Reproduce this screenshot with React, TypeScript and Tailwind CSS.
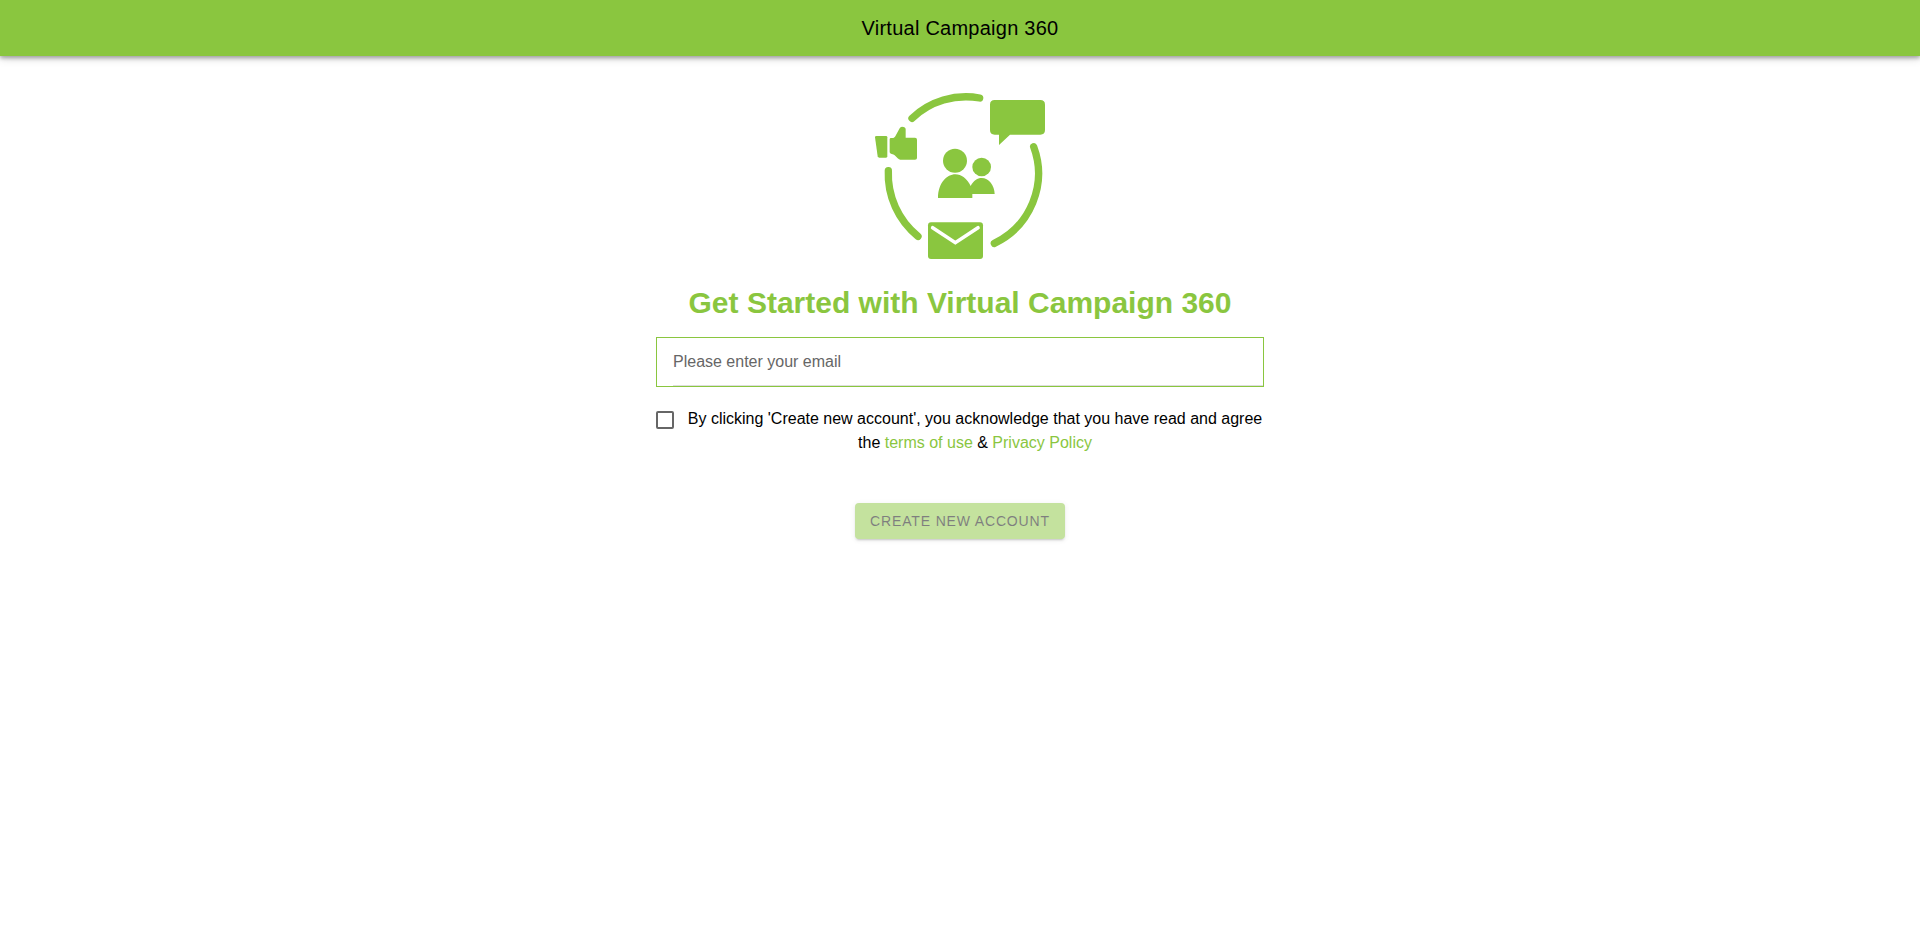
import { useState } from "react";

function CampaignLogo() {
  return (
    <svg
      viewBox="0 0 600 570"
      className="h-[190px] w-[200px] text-[#8ac63f]"
      fill="currentColor"
      role="img"
      aria-label="Virtual Campaign 360 logo"
    >
      {/* ring */}
      <g
        fill="none"
        stroke="currentColor"
        strokeWidth="22"
        strokeLinecap="round"
      >
        <path d="M156 115A235 235 0 0 1 359 54" />
        <path d="M521 200A232 232 0 0 1 403 490" />
        <path d="M85 272A240 240 0 0 0 174 469" />
      </g>
      {/* thumbs up */}
      <path d="M49 168H78Q82 168 82 172V229Q82 233 78 233H58Q54 233 53 229L45 172Q45 168 49 168Z" />
      <path d="M93 174H100Q104 173 106 169L119 145Q121 140 126 140Q137 140 137 148V173H165Q171 173 171 179V234Q171 239 165 239H121Q117 239 113 235L104 226Q102 223 93 221Q89 220 89 216V178Q89 174 93 174Z" />
      {/* speech bubble */}
      <path d="M404 60H541Q555 60 555 74V150Q555 164 541 164H450L417 195V164H404Q390 164 390 150V74Q390 60 404 60Z" />
      {/* people */}
      <circle cx="285" cy="242" r="36" />
      <circle cx="365" cy="261" r="28" />
      <path d="M234 354C234 309 261 283 286 283C304 283 321 296 332 318C341 302 352 294 365 294C386 294 404 317 404 342H337V354Z" />
      {/* envelope */}
      <rect x="204" y="427" width="165" height="110" rx="9" />
      <path
        d="M218 443L286 488L354 443"
        fill="none"
        stroke="white"
        strokeWidth="11"
        strokeLinecap="round"
      />
    </svg>
  );
}

export default function App() {
  const [email, setEmail] = useState("");
  const [agreed, setAgreed] = useState(false);

  return (
    <div className="min-h-screen bg-white font-['Liberation_Sans',Arial,sans-serif] text-base text-black">
      <header className="flex h-14 items-center justify-center bg-[#8ac63f] shadow-[0_2px_4px_rgba(0,0,0,0.3),0_1px_10px_rgba(0,0,0,0.2)]">
        <div className="text-xl tracking-[0.0125em]">Virtual Campaign 360</div>
      </header>

      <main className="mx-auto flex max-w-[640px] flex-col items-center px-4 pt-6">
        <CampaignLogo />

        <h1 className="mt-[15px] text-center text-3xl leading-9 font-bold text-[#8ac63f]">
          Get Started with Virtual Campaign 360
        </h1>

        <form
          className="mt-4 flex w-full flex-col items-center"
          onSubmit={(e) => e.preventDefault()}
        >
          <div className="w-full border border-[#8ac63f] pl-4">
            <input
              type="email"
              aria-label="Email"
              placeholder="Please enter your email"
              value={email}
              onChange={(e) => setEmail(e.target.value)}
              className="block h-12 w-full border-b border-[#dedede] pr-4 outline-none placeholder:text-[#666666]"
            />
          </div>

          <div className="mt-5 flex w-full items-start gap-3">
            <input
              id="agree"
              type="checkbox"
              checked={agreed}
              onChange={(e) => setAgreed(e.target.checked)}
              className="mt-1 size-[18px] shrink-0 appearance-none rounded-[2px] border-2 border-[#666666] checked:border-[#8ac63f] checked:bg-[#8ac63f]"
            />
            <label htmlFor="agree" className="flex-1 text-center leading-6">
              By clicking 'Create new account', you acknowledge that you have
              read and agree the{" "}
              <a href="#terms" className="text-[#8ac63f]">
                terms of use
              </a>{" "}
              &amp;{" "}
              <a href="#privacy" className="text-[#8ac63f]">
                Privacy Policy
              </a>
            </label>
          </div>

          <button
            type="submit"
            disabled={!email || !agreed}
            className="mt-12 h-9 rounded bg-[#8ac63f] px-[15px] text-sm tracking-[0.06em] uppercase shadow-[0_3px_1px_-2px_rgba(0,0,0,0.2),0_2px_2px_0_rgba(0,0,0,0.14),0_1px_5px_0_rgba(0,0,0,0.12)] disabled:opacity-50"
          >
            Create new account
          </button>
        </form>
      </main>
    </div>
  );
}
